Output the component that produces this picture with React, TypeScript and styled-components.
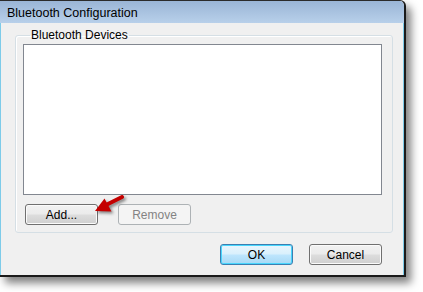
import styled, { createGlobalStyle, css } from "styled-components";

const GlobalStyle = createGlobalStyle`
  html, body {
    margin: 0;
    padding: 0;
    background: #ffffff;
  }
  body {
    font-family: "Liberation Sans", Arial, sans-serif;
    font-size: 12px;
    color: #000;
  }
`;

const Page = styled("div")`
  position: relative;
  width: 423px;
  height: 292px;
  overflow: hidden;
`;

const Frame = styled("div")`
  width: 406px;
  height: 277px;
  box-sizing: border-box;
  border-top: 1px solid #2b2b2b;
  border-right: 2px solid #1a1a1a;
  border-bottom: 2px solid #1a1a1a;
  border-top-right-radius: 6px;
  box-shadow: 5px 6px 9px rgba(0, 0, 0, 0.5);
  display: flex;
  flex-direction: column;
  overflow: hidden;
  background: #f0f0f0;
`;

const TitleBar = styled("div")`
  height: 21px;
  flex: none;
  display: flex;
  align-items: center;
  padding-left: 7px;
  padding-top: 1px;
  background: linear-gradient(#9ab5d6, #b8d0ea);
  font-size: 12.5px;
`;

const Client = styled("div")`
  flex: 1;
  display: flex;
  flex-direction: column;
  border-left: 1px solid #7dcbe9;
  border-right: 1px solid #7dcbe9;
  border-bottom: 1px solid #7dcbe9;
  padding: 5px 10px 10px 14px;
`;

const GroupBox = styled("fieldset")`
  margin: 0;
  padding: 2px 10px 7px 7px;
  border: 1px solid #d5dfe5;
  border-radius: 3px;
  box-shadow: inset 1px 1px 0 #ffffff;
  display: flex;
  flex-direction: column;
  gap: 9px;
`;

const Legend = styled("legend")`
  padding: 0 1px;
  margin-left: 7px;
  font-size: 12px;
  line-height: 14px;
`;

const ListBox = styled("div")`
  height: 149px;
  background: #ffffff;
  border: 1px solid #828790;
`;

const Row = styled("div")<{ $end?: boolean; $gap: number }>`
  display: flex;
  gap: ${(p) => p.$gap}px;
  ${(p) =>
    p.$end
      ? css`
          justify-content: flex-end;
          margin-top: 11px;
          padding-right: 11px;
        `
      : css`
          padding-left: 2px;
        `}
`;

const Button = styled("div")<{ $variant?: "default" | "disabled" }>`
  width: 73px;
  height: 21px;
  box-sizing: border-box;
  display: flex;
  align-items: center;
  justify-content: center;
  border-radius: 3px;
  font-size: 12px;
  border: 1px solid #707070;
  box-shadow: inset 0 0 0 1px #fbfbfb;
  background: linear-gradient(#f2f2f2 0%, #ebebeb 48%, #dddddd 52%, #cfcfcf 100%);
  ${(p) =>
    p.$variant === "default" &&
    css`
      border-color: #3c7fb1;
      box-shadow: inset 0 0 0 1px #48d6fd;
      background: linear-gradient(#eaf6fd 0%, #d9f0fc 48%, #bee6fd 52%, #a7d9f5 100%);
    `}
  ${(p) =>
    p.$variant === "disabled" &&
    css`
      border-color: #adb2b5;
      box-shadow: none;
      background: #f4f4f4;
      color: #838383;
    `}
`;

const Arrow = styled("svg")`
  position: absolute;
  left: 92px;
  top: 192px;
  width: 34px;
  height: 24px;
  overflow: visible;
  filter: drop-shadow(2px 2px 1.5px rgba(0, 0, 0, 0.45));
`;

export default function App() {
  return (
    <>
      <GlobalStyle />
      <Page>
        <Frame>
          <TitleBar>Bluetooth Configuration</TitleBar>
          <Client>
            <GroupBox>
              <Legend>Bluetooth Devices</Legend>
              <ListBox />
              <Row $gap={20}>
                <Button>Add...</Button>
                <Button $variant="disabled">Remove</Button>
              </Row>
            </GroupBox>
            <Row $end $gap={16}>
              <Button $variant="default">OK</Button>
              <Button>Cancel</Button>
            </Row>
          </Client>
        </Frame>
        <Arrow viewBox="0 0 34 24">
          <line x1="14" y1="13" x2="30" y2="5" stroke="#c40000" strokeWidth="4" strokeLinecap="round" />
          <polygon points="3,19 12.5,6.5 19.5,19.5" fill="#c40000" />
        </Arrow>
      </Page>
    </>
  );
}
